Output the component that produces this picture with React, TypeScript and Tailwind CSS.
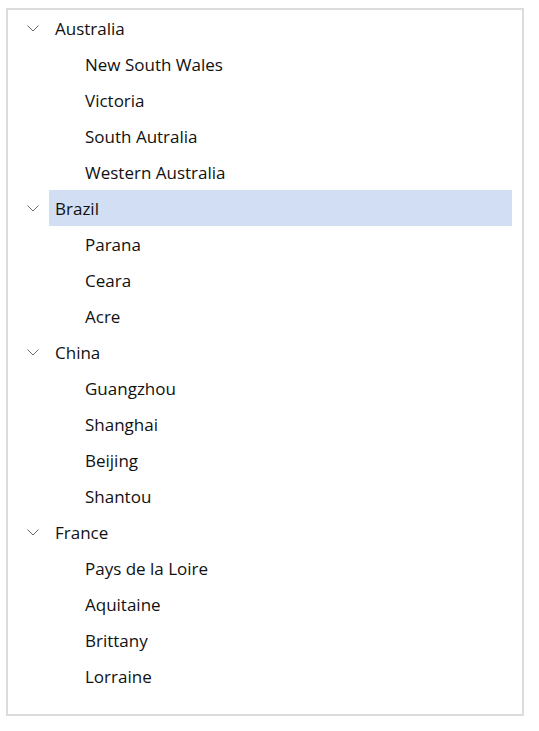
import React, { useState } from 'react';

interface TreeNode {
  name: string;
  children: string[];
}

const data: TreeNode[] = [
  { name: 'Australia', children: ['New South Wales', 'Victoria', 'South Autralia', 'Western Australia'] },
  { name: 'Brazil', children: ['Parana', 'Ceara', 'Acre'] },
  { name: 'China', children: ['Guangzhou', 'Shanghai', 'Beijing', 'Shantou'] },
  { name: 'France', children: ['Pays de la Loire', 'Aquitaine', 'Brittany', 'Lorraine'] },
];

const Chevron = () => (
  <svg width="12" height="7" viewBox="0 0 12 7" fill="none" className="block">
    <path d="M0.5 0.5 L6 6 L11.5 0.5" stroke="#6b6b6b" strokeWidth="1" />
  </svg>
);

const App: React.FC = () => {
  const [selected, setSelected] = useState('Brazil');

  return (
    <div className="w-[539px] h-[731px] bg-white pt-2 pl-[6px]" style={{ fontFamily: '"Open Sans", "Noto Sans", sans-serif' }}>
      <div className="w-[518px] h-[708px] border-2 border-[#dcdcdc] pr-[10px]">
        {data.map((node) => (
          <div key={node.name}>
            <div className="flex h-9 items-center">
              <div className="w-[41px] flex justify-end pr-[10px]">
                <Chevron />
              </div>
              <div
                onClick={() => setSelected(node.name)}
                className={`flex-1 h-9 flex items-center pl-[6px] pt-[2px] text-[17px] text-[#111] ${selected === node.name ? 'bg-[#d1def3]' : ''}`}
              >
                {node.name}
              </div>
            </div>
            {node.children.map((c) => (
              <div key={c} className="flex h-9 items-center pl-[71px]">
                <div
                  onClick={() => setSelected(c)}
                  className={`flex-1 h-9 flex items-center pl-[6px] pt-[2px] text-[17px] text-[#111] ${selected === c ? 'bg-[#d1def3]' : ''}`}
                >
                  {c}
                </div>
              </div>
            ))}
          </div>
        ))}
      </div>
    </div>
  );
};

export default App;
